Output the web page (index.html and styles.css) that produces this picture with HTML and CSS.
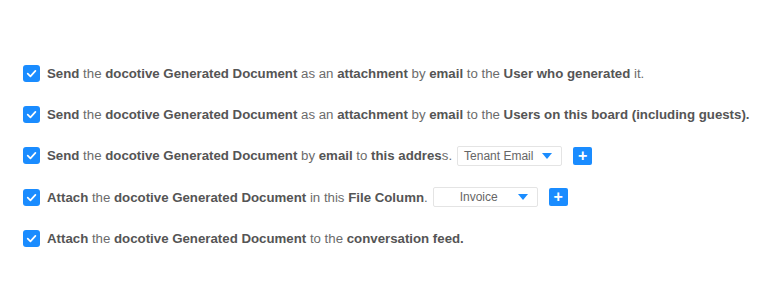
FILE: index.html
```html
<!DOCTYPE html>
<html>
<head>
    <title>Document Delivery Options</title>
    <link rel="stylesheet" href="styles.css">
</head>
<body>
    <div class="options">
        <label class="option">
            <span class="check"><svg viewBox="0 0 12 12"><path d="M2.5 6.2 L5 8.6 L9.6 3.6"/></svg></span>
            <span class="text"><b>Send</b> the <b>docotive Generated Document</b> as an <b>attachment</b> by <b>email</b> to the <b>User who generated</b> it.</span>
        </label>
        <label class="option">
            <span class="check"><svg viewBox="0 0 12 12"><path d="M2.5 6.2 L5 8.6 L9.6 3.6"/></svg></span>
            <span class="text"><b>Send</b> the <b>docotive Generated Document</b> as an <b>attachment</b> by <b>email</b> to the <b>Users on this board (including guests).</b></span>
        </label>
        <label class="option">
            <span class="check"><svg viewBox="0 0 12 12"><path d="M2.5 6.2 L5 8.6 L9.6 3.6"/></svg></span>
            <span class="text"><b>Send</b> the <b>docotive Generated Document</b> by <b>email</b> to <b>this addres</b>s.</span>
            <span class="select select-email">
                <span class="value">Tenant Email</span>
                <span class="caret"></span>
            </span>
            <span class="add">+</span>
        </label>
        <label class="option">
            <span class="check"><svg viewBox="0 0 12 12"><path d="M2.5 6.2 L5 8.6 L9.6 3.6"/></svg></span>
            <span class="text"><b>Attach</b> the <b>docotive Generated Document</b> in this <b>File Column</b>.</span>
            <span class="select select-file">
                <span class="value">Invoice</span>
                <span class="caret"></span>
            </span>
            <span class="add">+</span>
        </label>
        <label class="option">
            <span class="check"><svg viewBox="0 0 12 12"><path d="M2.5 6.2 L5 8.6 L9.6 3.6"/></svg></span>
            <span class="text"><b>Attach</b> the <b>docotive Generated Document</b> to the <b>conversation feed.</b></span>
        </label>
    </div>
</body>
</html>
```

FILE: styles.css
```css
body {
    font-family: "Liberation Sans", Arial, sans-serif;
    font-size: 13.25px;
    color: #6b6b6b;
    margin: 0;
    padding: 53px 0 0 23px;
    background: white;
}
.options {
    display: flex;
    flex-direction: column;
}
.option {
    display: flex;
    align-items: center;
    height: 41.2px;
}
.check {
    width: 17px;
    height: 17px;
    border-radius: 3px;
    background: #1a8cff;
    display: flex;
    align-items: center;
    justify-content: center;
    margin-right: 7px;
    flex-shrink: 0;
}
.check svg {
    width: 13px;
    height: 13px;
    fill: none;
    stroke: white;
    stroke-width: 1.6;
    stroke-linecap: round;
    stroke-linejoin: round;
}
.text b {
    color: #555;
}
.select {
    display: flex;
    align-items: center;
    height: 20px;
    width: 105px;
    box-sizing: border-box;
    border: 1px solid #e4e4e4;
    border-radius: 2px;
    margin-left: 5px;
    font-size: 12px;
    color: #666;
    padding: 0 6px;
}
.select-email .value {
    flex: 1;
}
.select-file .value {
    flex: 1;
    text-align: center;
}
.caret {
    width: 0;
    height: 0;
    border-left: 5px solid transparent;
    border-right: 5px solid transparent;
    border-top: 6px solid #1a8cff;
    margin-right: 3px;
}
.add {
    width: 19px;
    height: 18px;
    background: #1a8cff;
    color: white;
    font-weight: bold;
    font-size: 16px;
    line-height: 18px;
    text-align: center;
    border-radius: 2px;
    margin-left: 11px;
}
```
